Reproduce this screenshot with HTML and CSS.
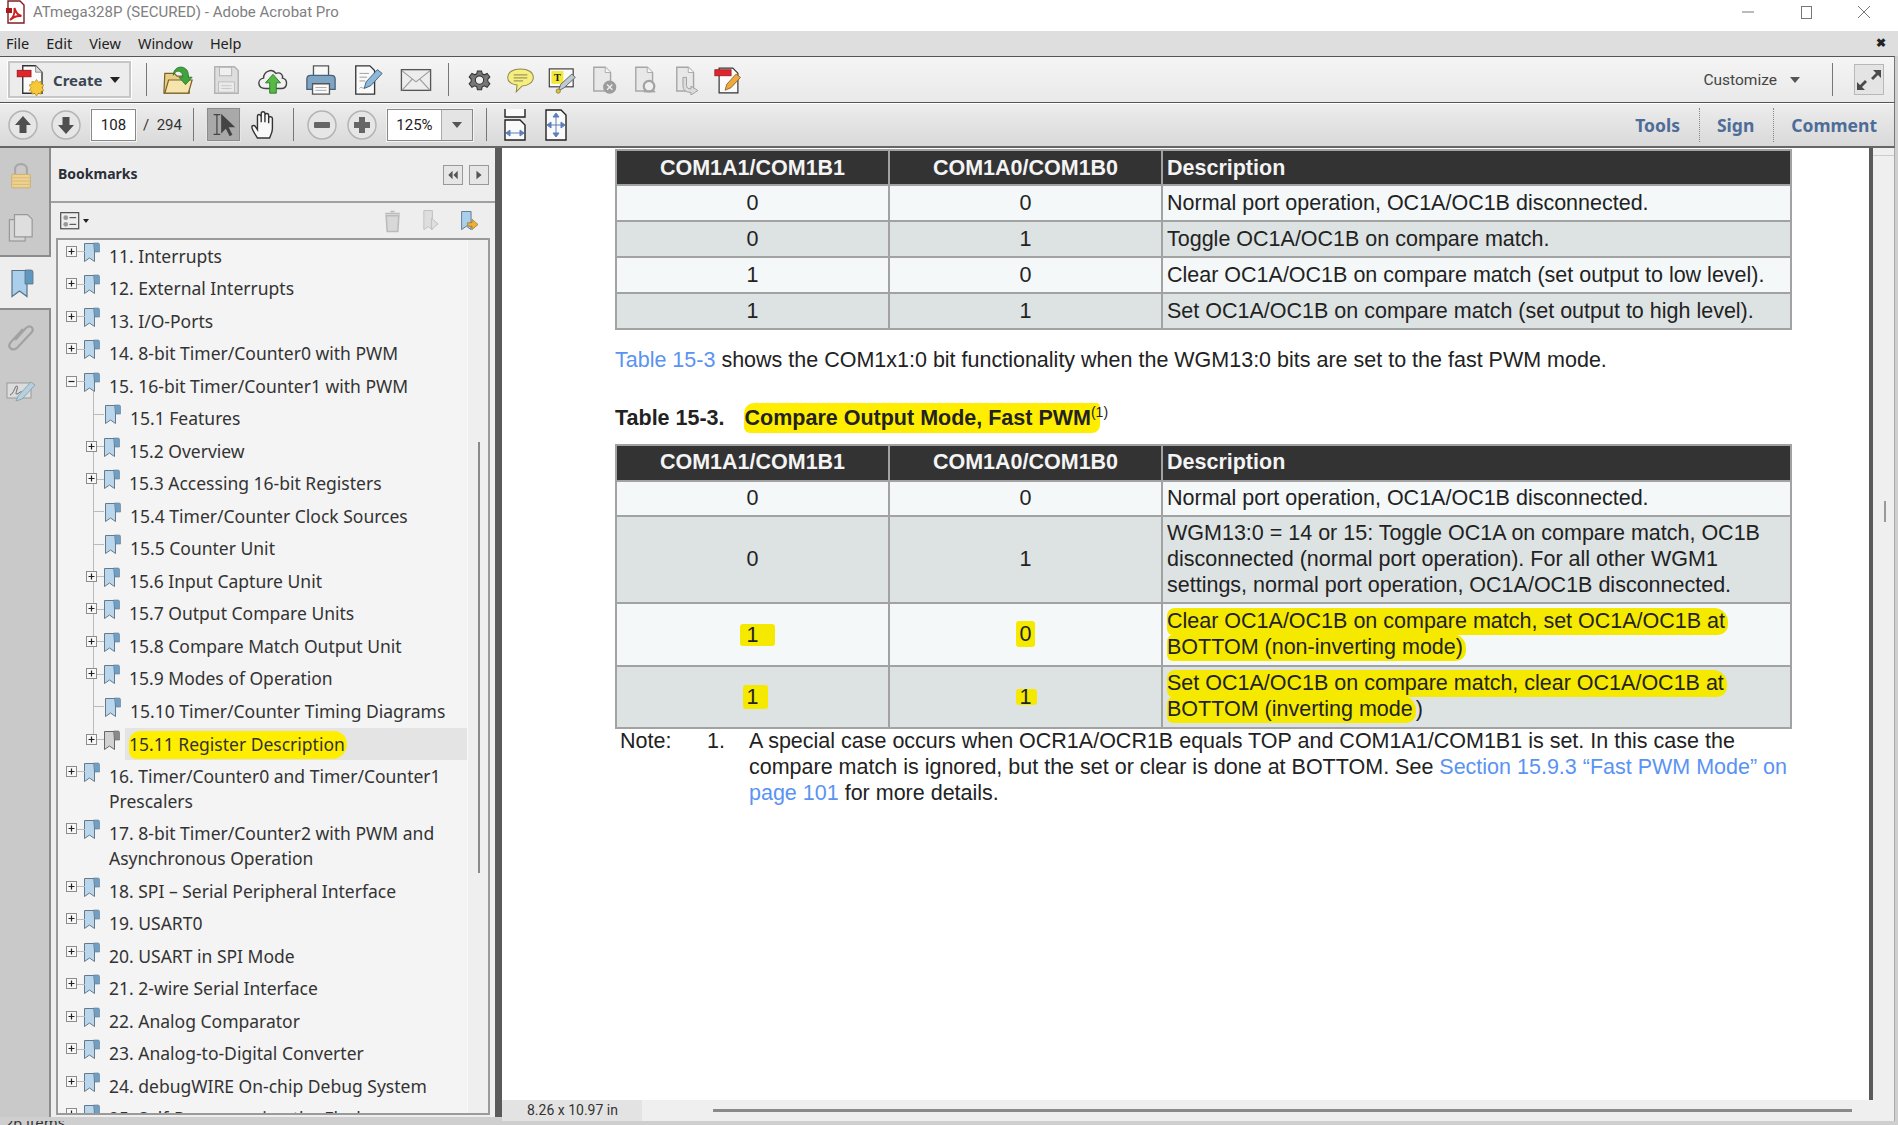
FILE: index.html
```html
<!DOCTYPE html>
<html lang="en">

<head>
    <meta charset="UTF-8">
    <meta name="viewport" content="width=device-width, initial-scale=1.0">
    <title>ATmega328P (SECURED) - Adobe Acrobat Pro</title>
    <link rel="stylesheet" href="styles.css">
</head>

<body>
    <svg class="defs" aria-hidden="true">
        <symbol id="bm" viewBox="0 0 17 21">
            <path d="M1.5 1.5h10v18l-5-3.5-5 3.5z" fill="#b9d6ec" stroke="#66798a"/>
            <path d="M10.5 1h4.5a1.500 1.500 0 0 1 1.500 1.500v7.500h-5z" fill="#6f9fc4" stroke="#66798a" stroke-width=".6"/>
        </symbol>
        <symbol id="bmg" viewBox="0 0 17 21">
            <path d="M1.500 1.500h10v18l-5-3.500-5 3.500z" fill="#d2d2d2" stroke="#666"/>
            <path d="M10.500 1h4.500a1.500 1.500 0 0 1 1.500 1.500v7.500h-5z" fill="#8a8a8a" stroke="#666" stroke-width=".6"/>
        </symbol>
        <symbol id="plus" viewBox="0 0 11 11">
            <rect x=".5" y=".5" width="10" height="10" fill="#f8f8f8" stroke="#8c8c8c"/>
            <path d="M2.500 5.500h6M5.500 2.500v6" stroke="#222" stroke-width="1.200"/>
        </symbol>
        <symbol id="minus" viewBox="0 0 11 11">
            <rect x=".5" y=".5" width="10" height="10" fill="#f8f8f8" stroke="#8c8c8c"/>
            <path d="M2.500 5.500h6" stroke="#222" stroke-width="1.200"/>
        </symbol>
        <symbol id="up" viewBox="0 0 30 30">
            <circle cx="15" cy="15" r="14" fill="#e6e6e6" stroke="#b4b4b4" stroke-width="1.500"/>
            <path d="M15 6l8 9h-4.500v8h-7v-8h-4.500z" fill="#4f4f4f"/>
        </symbol>
        <symbol id="down" viewBox="0 0 30 30">
            <circle cx="15" cy="15" r="14" fill="#e6e6e6" stroke="#b4b4b4" stroke-width="1.500"/>
            <path d="M15 24l8-9h-4.500v-8h-7v8h-4.500z" fill="#4f4f4f"/>
        </symbol>
        <symbol id="ghostdoc" viewBox="0 0 32 34">
            <path d="M5 2.500h13l6 6v21h-19z" fill="#e8e8e8" stroke="#a6a6a6" stroke-width="1.600"/>
            <path d="M18 2.500v6h6" fill="#f6f6f6" stroke="#a6a6a6"/>
        </symbol>
    </svg>

    <div class="titlebar">
        <svg class="pdf-logo" viewBox="0 0 20 24">
            <path d="M2 1h12l4 4v18h-16z" fill="#fff" stroke="#7d1f22" stroke-width="1.400"/>
            <path d="M4 20c3-2 5-7 4.500-12 1 4 3 7 7 8-4-.5-8 .5-11.500 4z" fill="none" stroke="#c8211f" stroke-width="2"/>
            <path d="M0 8h6v5h-6z" fill="#a9191b"/>
        </svg>
        <span class="title-text">ATmega328P (SECURED) - Adobe Acrobat Pro</span>
        <div class="win-btns">
            <svg viewBox="0 0 14 14"><path d="M1 7h12" stroke="#777" fill="none"/></svg>
            <svg viewBox="0 0 14 14"><rect x="2.500" y="1.500" width="10" height="12" stroke="#777" fill="none"/></svg>
            <svg viewBox="0 0 14 14"><path d="M1 1l12 12M13 1l-12 12" stroke="#777" fill="none"/></svg>
        </div>
    </div>

    <div class="menubar">
        <span>File</span><span>Edit</span><span>View</span><span>Window</span><span>Help</span>
        <b class="menu-close">&#10006;</b>
    </div>

    <div class="toolbar tb-top">
        <button class="create">
            <svg class="create-ico" viewBox="0 0 32 36">
                <path d="M7 3h14l7 7v23h-21z" fill="#fbfbfb" stroke="#333" stroke-width="1.500"/>
                <path d="M21 3v7h7" fill="#ddd" stroke="#888"/>
                <rect x="1" y="8" width="15" height="7" fill="#e2252b" stroke="#9b1b1f"/>
                <path d="M22 18l2 3 3-1 0 3 3 1-2 3 2 3-3 1 0 3-3-1-2 3-2-3-3 1 0-3-3-1 2-3-2-3 3-1 0-3 3 1z" fill="#f7c838" stroke="#b98a1c" stroke-width=".8"/>
            </svg>
            <span>Create</span><i class="caret"></i>
        </button>
        <i class="sep first"></i>
        <div class="group wide">
            <svg class="ti" viewBox="0 0 34 34">
                <path d="M2 31l1-21h10l3 3h12l1 18z" fill="#e9cf86" stroke="#7a6329" stroke-width="1.300"/>
                <path d="M3 31l4-14h25l-4 14z" fill="#f5e4ac" stroke="#7a6329" stroke-width="1.300"/>
                <path d="M12 12c0-8 8-11 13-7 3 2 3 6 3 9h4l-7 8-7-8h4c0-3-1-5-3-6-3-1-5 0-7 4z" fill="#3fa43b" stroke="#24712a" stroke-width=".8"/>
            </svg>
            <svg class="ti" viewBox="0 0 34 34">
                <path d="M5 3h21l4 4v24h-25z" fill="#dedede" stroke="#b2b2b2" stroke-width="1.500"/>
                <rect x="10" y="3.500" width="13" height="9" fill="#efefef" stroke="#b2b2b2"/>
                <rect x="9" y="19" width="17" height="11" fill="#eaeaea" stroke="#bdbdbd"/>
                <path d="M12 23h11M12 26h11" stroke="#c6c6c6"/>
            </svg>
            <svg class="ti" viewBox="0 0 34 34">
                <path d="M9 26c-9 0-9-10-2-11 0-7 9-11 13-5 5-2 8 2 7 5 6 1 6 11-1 11z" fill="#f1f1f1" stroke="#444" stroke-width="1.500"/>
                <path d="M17 11l8 9h-4.500v11h-7v-11h-4.500z" fill="#58b947" stroke="#2f7a2b"/>
            </svg>
            <svg class="ti" viewBox="0 0 34 34">
                <path d="M9 2h16v11h-16z" fill="#f8f8f8" stroke="#555" stroke-width="1.400"/>
                <path d="M2 16c0-3 2-4 4-4h22c2 0 4 1 4 4v11h-30z" fill="#7fa5c4" stroke="#47627b" stroke-width="1.400"/>
                <path d="M8 21h18v11h-18z" fill="#fbfbfb" stroke="#555" stroke-width="1.400"/>
                <path d="M11 25h12M11 28h12" stroke="#aaa"/>
            </svg>
            <svg class="ti" viewBox="0 0 34 34">
                <path d="M4 2h15l5 5v25h-20z" fill="#fafafa" stroke="#333" stroke-width="1.400"/>
                <path d="M8 10h10M8 14h8M8 18h6M8 26c2-3 3 1 5-1" stroke="#999" fill="none"/>
                <path d="M13 26l2-7 12-13 5 4-12 13z" fill="#8db8d8" stroke="#3f5f7a"/>
            </svg>
            <svg class="ti" viewBox="0 0 34 34">
                <rect x="1.500" y="6" width="31" height="22" fill="#ededed" stroke="#555" stroke-width="1.400"/>
                <path d="M2 7l15 12 15-12M2 28l11-12M32 28l-11-12" fill="none" stroke="#999" stroke-width="1.200"/>
            </svg>
        </div>
        <i class="sep"></i>
        <div class="group narrow">
            <svg class="ti" viewBox="-4 -4 42 42">
                <path d="M14 4h6l1 4 3 1.500 4-2 4 5-3 3.500v3l3 3.500-4 5-4-2-3 1.500-1 4h-6l-1-4-3-1.500-4 2-4-5 3-3.500v-3l-3-3.500 4-5 4 2 3-1.500z" fill="#777" stroke="#333" stroke-width="1.500"/>
                <circle cx="17" cy="17" r="6" fill="#eee" stroke="#333" stroke-width="1.500"/>
            </svg>
            <svg class="ti" viewBox="0 0 34 34">
                <path d="M17 4c9 0 15 4 15 10s-7 10-13 10l-7 7 1-8c-6-1-11-4-11-9 0-6 6-10 15-10z" fill="#f7ee82" stroke="#8e8a4e" stroke-width="1.200"/>
                <path d="M9 11h16M9 14.500h16M9 18h11" stroke="#a09a58" stroke-width="1.300"/>
            </svg>
            <svg class="ti" viewBox="0 0 34 34">
                <rect x="1.500" y="4" width="28" height="21" fill="#fbfbfb" stroke="#333" stroke-width="1.300"/>
                <rect x="4" y="6.500" width="14" height="15" fill="#f3e934"/>
                <text class="t-mark" x="7" y="18">T</text>
                <path d="M12 30l3-8 13-12 4 4-13 12z" fill="#bfc9d2" stroke="#555"/>
                <circle cx="12" cy="30" r="2.500" fill="#d8c24a" stroke="#8c7c2b"/>
            </svg>
            <svg class="ti" viewBox="0 0 32 34">
                <use href="#ghostdoc"/>
                <circle cx="23" cy="25" r="7.500" fill="#9c9c9c"/>
                <path d="M20 22l6 6M26 22l-6 6" stroke="#eee" stroke-width="1.500"/>
            </svg>
            <svg class="ti" viewBox="0 0 32 34">
                <use href="#ghostdoc"/>
                <circle cx="20" cy="24" r="6" fill="#efefef" stroke="#a2a2a2" stroke-width="2.500"/>
                <path d="M14 30h13" stroke="#a2a2a2" stroke-width="2"/>
            </svg>
            <svg class="ti" viewBox="0 0 32 34">
                <use href="#ghostdoc"/>
                <path d="M16 14v9c0 3 2 4 5 4v-3l8 5-8 5v-3c-6 0-9-2-9-8v-9z" fill="#dcdcdc" stroke="#9a9a9a"/>
            </svg>
            <svg class="ti" viewBox="0 0 34 34">
                <path d="M6 3h16l6 6v23h-22z" fill="#fbfbfb" stroke="#333" stroke-width="1.400"/>
                <rect x="1" y="5" width="19" height="7" fill="#e2252b" stroke="#9b1b1f"/>
                <path d="M13 29l2-7 11-12 5 4-11 12z" fill="#efa93f" stroke="#8a5f20"/>
            </svg>
        </div>
        <span class="customize">Customize</span><i class="caret small"></i>
        <i class="sep end"></i>
        <svg class="expand" viewBox="0 0 30 31">
            <rect x=".5" y=".5" width="29" height="30" fill="#e4e4e4" stroke="#b8b8b8"/>
            <path d="M17 14l5-5-3-3h8v8l-3-3-5 5zM13 18l-5 5 3 3h-8v-8l3 3 5-5z" fill="#4a4a4a"/>
        </svg>
    </div>

    <div class="toolbar tb-nav">
        <svg class="round first-round"><use href="#up"/></svg>
        <svg class="round"><use href="#down"/></svg>
        <span class="page-box">108</span>
        <span class="page-total">/ &nbsp;294</span>
        <i class="sep"></i>
        <span class="select-tool">
            <svg viewBox="0 0 33 33">
                <path d="M6 6h7M6 27h7M9.500 6v21" stroke="#444" fill="none" stroke-width="1.300"/>
                <path d="M14 5l0 21 5-5 4 8 3-1.500-4-8h7z" fill="#444"/>
            </svg>
        </span>
        <svg class="hand" viewBox="0 0 30 32">
            <path d="M8 30c-2-4-6-8-6-12 0-2 3-2 4 0l2 3v-14c0-3 3-3 4 0v6-9c0-3 4-3 4 0v9-7c0-3 4-3 4 0v8-5c0-3 4-2 4 0v11c0 4-2 7-3 10z" fill="#f8f8f8" stroke="#333" stroke-width="1.500"/>
        </svg>
        <i class="sep"></i>
        <svg class="round zoom-out" viewBox="0 0 30 30">
            <circle cx="15" cy="15" r="14" fill="#e6e6e6" stroke="#b4b4b4" stroke-width="1.500"/>
            <rect x="7" y="12" width="16" height="6" rx="1" fill="#666"/>
        </svg>
        <svg class="round zoom-in" viewBox="0 0 30 30">
            <circle cx="15" cy="15" r="14" fill="#e6e6e6" stroke="#b4b4b4" stroke-width="1.500"/>
            <path d="M12 7h6v5h5v6h-5v5h-6v-5h-5v-6h5z" fill="#666"/>
        </svg>
        <div class="zoom-combo"><span>125%</span><b><i class="caret small"></i></b></div>
        <i class="sep"></i>
        <svg class="fit fit-width" viewBox="0 0 24 32">
            <path d="M2 0v8h20v-8M2 11h15l5 5v15h-20z" fill="#fafafa" stroke="#222" stroke-width="1.400"/>
            <path d="M3 24h18M3 24l4-3v6zM21 24l-4-3v6z" fill="#5d7fbd" stroke="#5d7fbd"/>
        </svg>
        <svg class="fit" viewBox="0 0 24 32">
            <path d="M2 1h15l5 5v25h-20z" fill="#fafafa" stroke="#222" stroke-width="1.400"/>
            <path d="M12 5v22M4 16h16M12 4l-3 4h6zM12 28l-3-4h6zM3 16l4-3v6zM21 16l-4-3v6z" fill="#5d7fbd" stroke="#5d7fbd"/>
        </svg>
        <div class="task-tabs">
            <span>Tools</span><span>Sign</span><span>Comment</span>
        </div>
    </div>

    <div class="workspace">
        <aside class="rail">
            <div class="rail-tab">
                <svg class="rail-ico lock" viewBox="0 0 26 32">
                    <path d="M6 14v-6c0-8 14-8 14 0v6" fill="none" stroke="#a8a8a8" stroke-width="2.500"/>
                    <rect x="2" y="14" width="22" height="16" rx="1" fill="#ecd18f" stroke="#c9a96a"/>
                    <path d="M3 18h20M3 22h20M3 26h20" stroke="#d7b775"/>
                </svg>
                <svg class="rail-ico pages" viewBox="0 0 28 32">
                    <rect x="1.500" y="7" width="17" height="23" fill="#d4d4d4" stroke="#999" stroke-width="1.300"/>
                    <path d="M7 1.500h14l5 5v19h-19z" fill="#dedede" stroke="#999" stroke-width="1.300"/>
                </svg>
            </div>
            <div class="rail-tab active">
                <svg class="rail-ico" viewBox="0 0 24 30">
                    <path d="M2 1.500h15v26l-7.500-5.500-7.500 5.500z" fill="#a9cfec" stroke="#5b7283" stroke-width="1.200"/>
                    <path d="M15 1h6a2 2 0 0 1 2 2v12h-8z" fill="#5f97bf" stroke="#5b7283" stroke-width=".8"/>
                </svg>
            </div>
            <div class="rail-tab">
                <svg class="rail-ico clip" viewBox="0 0 28 30">
                    <path d="M8 17l11-12c5-4 9 1 5 5l-14 15c-6 4-10-2-6-6l12-13" fill="none" stroke="#a2a2a2" stroke-width="2.200"/>
                </svg>
                <svg class="rail-ico sign" viewBox="0 0 30 26">
                    <rect x="1" y="4" width="24" height="15" fill="#dcdcdc" stroke="#9a9a9a"/>
                    <path d="M4 16c4-1 5-10 7-9s-3 9 0 8 3-3 5-2" fill="none" stroke="#666"/>
                    <path d="M10 22l2-5 13-14 4 3-13 14z" fill="#b6cfe3" stroke="#8aa"/>
                </svg>
            </div>
        </aside>

        <section class="panel">
            <header class="panel-head">
                <h2>Bookmarks</h2>
                <span class="mini-btn">
                    <svg viewBox="0 0 14 14"><path d="M6.500 2v10l-5-5zM12.500 2v10l-5-5z" fill="#555"/></svg>
                </span>
                <span class="mini-btn">
                    <svg viewBox="0 0 14 14"><path d="M4 2v10l6-5z" fill="#555"/></svg>
                </span>
            </header>
            <div class="panel-tools">
                <svg class="opts" viewBox="0 0 21 19">
                    <rect x=".7" y=".7" width="19" height="17" fill="#eee" stroke="#444" stroke-width="1.200"/>
                    <circle cx="6" cy="6" r="2.500" fill="#999"/>
                    <circle cx="6" cy="13" r="2.500" fill="#999"/>
                    <path d="M10 6h7M10 13h7" stroke="#333"/>
                </svg>
                <i class="caret tiny"></i>
                <svg class="p-ico trash" viewBox="0 0 18 22">
                    <path d="M3 6h12l-1 15h-10zM2 4h14M7 2h4" fill="#d8d8d8" stroke="#bbb" stroke-width="1.500"/>
                </svg>
                <svg class="p-ico" viewBox="0 0 20 24">
                    <path d="M3 1h9v20l-4.500-3-4.500 3z" fill="#dedede" stroke="#c0c0c0"/>
                    <path d="M11 9l7 6-7 6z" fill="#dedede" stroke="#c0c0c0"/>
                </svg>
                <svg class="p-ico" viewBox="0 0 22 24">
                    <path d="M3 1h11v21l-5.500-4-5.500 4z" fill="#a9cfec" stroke="#56708a"/>
                    <path d="M10 14h5v-4l7 6-7 6v-4h-5z" fill="#eeb03a" stroke="#9b6f1c" stroke-width=".8"/>
                </svg>
            </div>
            <div class="tree">
                <ul class="tree-list">
                    <li class="node"><svg class="exp"><use href="#plus"/></svg><svg class="bm"><use href="#bm"/></svg><span>11. Interrupts</span></li>
                    <li class="node"><svg class="exp"><use href="#plus"/></svg><svg class="bm"><use href="#bm"/></svg><span>12. External Interrupts</span></li>
                    <li class="node"><svg class="exp"><use href="#plus"/></svg><svg class="bm"><use href="#bm"/></svg><span>13. I/O-Ports</span></li>
                    <li class="node"><svg class="exp"><use href="#plus"/></svg><svg class="bm"><use href="#bm"/></svg><span>14. 8-bit Timer/Counter0 with PWM</span></li>
                    <li class="node"><svg class="exp"><use href="#minus"/></svg><svg class="bm"><use href="#bm"/></svg><span>15. 16-bit Timer/Counter1 with PWM</span></li>
                    <li class="subs">
                        <ul>
                            <li class="node sub leaf"><svg class="bm"><use href="#bm"/></svg><span>15.1 Features</span></li>
                            <li class="node sub"><svg class="exp"><use href="#plus"/></svg><svg class="bm"><use href="#bm"/></svg><span>15.2 Overview</span></li>
                            <li class="node sub"><svg class="exp"><use href="#plus"/></svg><svg class="bm"><use href="#bm"/></svg><span>15.3 Accessing 16-bit Registers</span></li>
                            <li class="node sub leaf"><svg class="bm"><use href="#bm"/></svg><span>15.4 Timer/Counter Clock Sources</span></li>
                            <li class="node sub leaf"><svg class="bm"><use href="#bm"/></svg><span>15.5 Counter Unit</span></li>
                            <li class="node sub"><svg class="exp"><use href="#plus"/></svg><svg class="bm"><use href="#bm"/></svg><span>15.6 Input Capture Unit</span></li>
                            <li class="node sub"><svg class="exp"><use href="#plus"/></svg><svg class="bm"><use href="#bm"/></svg><span>15.7 Output Compare Units</span></li>
                            <li class="node sub"><svg class="exp"><use href="#plus"/></svg><svg class="bm"><use href="#bm"/></svg><span>15.8 Compare Match Output Unit</span></li>
                            <li class="node sub"><svg class="exp"><use href="#plus"/></svg><svg class="bm"><use href="#bm"/></svg><span>15.9 Modes of Operation</span></li>
                            <li class="node sub leaf"><svg class="bm"><use href="#bm"/></svg><span>15.10 Timer/Counter Timing Diagrams</span></li>
                            <li class="node sub selected"><svg class="exp"><use href="#plus"/></svg><svg class="bm"><use href="#bmg"/></svg><span class="sel-bg"><span class="sel-hl">15.11 Register Description</span></span></li>
                        </ul>
                    </li>
                    <li class="node"><svg class="exp"><use href="#plus"/></svg><svg class="bm"><use href="#bm"/></svg><span>16. Timer/Counter0 and Timer/Counter1<br>Prescalers</span></li>
                    <li class="node"><svg class="exp"><use href="#plus"/></svg><svg class="bm"><use href="#bm"/></svg><span>17. 8-bit Timer/Counter2 with PWM and<br>Asynchronous Operation</span></li>
                    <li class="node"><svg class="exp"><use href="#plus"/></svg><svg class="bm"><use href="#bm"/></svg><span>18. SPI – Serial Peripheral Interface</span></li>
                    <li class="node"><svg class="exp"><use href="#plus"/></svg><svg class="bm"><use href="#bm"/></svg><span>19. USART0</span></li>
                    <li class="node"><svg class="exp"><use href="#plus"/></svg><svg class="bm"><use href="#bm"/></svg><span>20. USART in SPI Mode</span></li>
                    <li class="node"><svg class="exp"><use href="#plus"/></svg><svg class="bm"><use href="#bm"/></svg><span>21. 2-wire Serial Interface</span></li>
                    <li class="node"><svg class="exp"><use href="#plus"/></svg><svg class="bm"><use href="#bm"/></svg><span>22. Analog Comparator</span></li>
                    <li class="node"><svg class="exp"><use href="#plus"/></svg><svg class="bm"><use href="#bm"/></svg><span>23. Analog-to-Digital Converter</span></li>
                    <li class="node"><svg class="exp"><use href="#plus"/></svg><svg class="bm"><use href="#bm"/></svg><span>24. debugWIRE On-chip Debug System</span></li>
                    <li class="node"><svg class="exp"><use href="#plus"/></svg><svg class="bm"><use href="#bm"/></svg><span>25. Self-Programming the Flash</span></li>
                </ul>
                <div class="tree-scroll"><i></i></div>
            </div>
        </section>

        <i class="splitter"></i>

        <main class="doc">
            <div class="page">
                <table class="reg short">
                    <tr><th>COM1A1/COM1B1</th><th>COM1A0/COM1B0</th><th class="desc">Description</th></tr>
                    <tr><td>0</td><td>0</td><td class="desc">Normal port operation, OC1A/OC1B disconnected.</td></tr>
                    <tr><td>0</td><td>1</td><td class="desc">Toggle OC1A/OC1B on compare match.</td></tr>
                    <tr><td>1</td><td>0</td><td class="desc">Clear OC1A/OC1B on compare match (set output to low level).</td></tr>
                    <tr><td>1</td><td>1</td><td class="desc">Set OC1A/OC1B on compare match (set output to high level).</td></tr>
                </table>

                <p class="intro"><a>Table 15-3</a> shows the COM1x1:0 bit functionality when the WGM13:0 bits are set to the fast PWM mode.</p>

                <p class="caption">Table 15-3.<span class="hl hl-cap">Compare Output Mode, Fast PWM</span><sup>(1)</sup></p>

                <table class="reg tall">
                    <tr><th>COM1A1/COM1B1</th><th>COM1A0/COM1B0</th><th class="desc">Description</th></tr>
                    <tr class="r-one"><td>0</td><td>0</td><td class="desc">Normal port operation, OC1A/OC1B disconnected.</td></tr>
                    <tr class="r-three"><td>0</td><td>1</td><td class="desc">WGM13:0 = 14 or 15: Toggle OC1A on compare match, OC1B<br>disconnected (normal port operation). For all other WGM1<br>settings, normal port operation, OC1A/OC1B disconnected.</td></tr>
                    <tr class="r-two"><td><span class="hl-num n-a">1</span></td><td><span class="hl-num n-b">0</span></td><td class="desc"><span class="hl">Clear OC1A/OC1B on compare match, set OC1A/OC1B at</span><br><span class="hl">BOTTOM (non-inverting mode)</span></td></tr>
                    <tr class="r-last"><td><span class="hl-num n-c">1</span></td><td><span class="hl-num n-d">1</span></td><td class="desc"><span class="hl">Set OC1A/OC1B on compare match, clear OC1A/OC1B at</span><br><span class="hl">BOTTOM (inverting mode</span>)</td></tr>
                </table>

                <div class="note">
                    <span>Note:</span>
                    <span>1.</span>
                    <p>A special case occurs when OCR1A/OCR1B equals TOP and COM1A1/COM1B1 is set. In this case the<br>compare match is ignored, but the set or clear is done at BOTTOM. See <a>Section 15.9.3 “Fast PWM Mode” on<br>page 101</a> for more details.</p>
                </div>
            </div>
            <footer class="doc-status">
                <span class="page-size">8.26 x 10.97 in</span>
                <i class="hscroll"></i>
            </footer>
        </main>

        <aside class="vscroll">
            <i class="v-top"></i>
            <i class="v-thumb"></i>
        </aside>
    </div>

    <div class="statusbar">26 items</div>
</body>

</html>
```

FILE: styles.css
```css
*,
::before,
::after {
    margin: 0;
    padding: 0;
    box-sizing: border-box;
}

html,
body {
    height: 100%;
    overflow: hidden;
}

body {
    font: 14px/1.2 "Noto Sans", sans-serif;
    background: #cfcfcf;
    color: #222;
}

i {
    display: block;
}

ul {
    list-style: none;
}

.defs {
    position: absolute;
    width: 0;
    height: 0;
}

/* window title */
.titlebar {
    height: 31px;
    background: #fff;
    display: flex;
    align-items: center;
    padding: 0 0 7px 6px;
}

.pdf-logo {
    width: 20px;
    height: 24px;
    margin-right: 7px;
}

.title-text {
    font: 15px Roboto, sans-serif;
    color: #808080;
}

.win-btns {
    margin-left: auto;
    margin-right: 27px;
    display: flex;
    gap: 44px;
}

.win-btns svg {
    width: 14px;
    height: 14px;
}

/* menu */
.menubar {
    height: 25px;
    background: #dedede;
    display: flex;
    align-items: center;
    padding: 0 12px 0 6px;
    font-size: 14.500px;
    color: #222;
}

.menubar span {
    margin-right: 17px;
}

.menu-close {
    margin-left: auto;
    font-size: 12px;
}

/* toolbars */
.toolbar {
    width: 1895px;
    display: flex;
    align-items: center;
    border-top: 1px solid #555;
    border-right: 1px solid #777;
}

.tb-top {
    height: 46px;
    padding-left: 8px;
    background: linear-gradient(#f5f5f5, #e9e9e9);
}

.tb-nav {
    height: 46px;
    padding-left: 8px;
    background: linear-gradient(#ededed, #d9d9d9);
    border-bottom: 2px solid #666;
    box-shadow: inset 0 1px #fff;
}

.create {
    width: 123px;
    height: 37px;
    display: flex;
    align-items: center;
    font: bold 15px "Noto Sans", sans-serif;
    color: #3a4654;
    background: #ececec;
    border: 2px solid #c6c6c6;
    outline: 1px solid #fff;
    padding-left: 6px;
}

.create-ico {
    width: 30px;
    height: 33px;
    margin-right: 7px;
}

.caret {
    width: 0;
    height: 0;
    border: 5px solid transparent;
    border-top: 6px solid #222;
    border-bottom: 0;
    margin-left: 8px;
}

.caret.small {
    border-top-color: #555;
}

.caret.tiny {
    border-width: 4px 3px 0;
    border-top-color: #222;
    margin-left: 3px;
}

.sep {
    width: 1px;
    height: 33px;
    background: #777;
    flex: none;
}

.sep.first {
    margin: 0 15px 0 15px;
}

.group {
    display: flex;
    align-items: center;
}

.wide {
    gap: 15.500px;
    margin-right: 16px;
}

.narrow {
    gap: 12.500px;
    margin-left: 16px;
}

.ti {
    width: 29px;
    height: 30px;
    flex: none;
}

.wide .ti {
    width: 32px;
    height: 32px;
}

.t-mark {
    font: bold 12px "Liberation Serif", serif;
    fill: #222;
}

.customize {
    margin-left: auto;
    font: 15.500px Roboto, sans-serif;
    color: #444;
}

.customize + .caret {
    margin-left: 13px;
}

.sep.end {
    margin: 0 21px 0 32px;
}

.expand {
    width: 30px;
    height: 31px;
    margin-right: 10px;
}

.round {
    width: 30px;
    height: 30px;
    flex: none;
    margin-right: 12px;
}

.first-round {
    margin-right: 13px;
}

.page-box {
    width: 45px;
    height: 32px;
    background: #fff;
    border: 1px solid #888;
    outline: 1px solid #f4f4f4;
    font: 15px/30px Roboto, sans-serif;
    text-align: center;
    margin-left: -2px;
}

.page-total {
    font: 15px Roboto, sans-serif;
    margin: 0 11px 0 7px;
    white-space: nowrap;
    color: #333;
}

.tb-nav .sep {
    margin-right: 13px;
}

.select-tool {
    width: 33px;
    height: 33px;
    background: #a9a9a9;
    border: 1px solid #8c8c8c;
    outline: 1px solid #e6e6e6;
    flex: none;
}

.select-tool svg {
    display: block;
    width: 31px;
    height: 31px;
}

.hand {
    width: 28px;
    height: 30px;
    margin: 0 15px 0 10px;
    flex: none;
}

.zoom-out {
    margin-right: 10px;
}

.zoom-in {
    margin-right: 10px;
}

.zoom-combo {
    width: 86px;
    height: 32px;
    display: flex;
    background: #fff;
    border: 1px solid #888;
    outline: 1px solid #f4f4f4;
    margin-right: 13px;
    font: 15px/30px Roboto, sans-serif;
    flex: none;
}

.zoom-combo span {
    flex: 1;
    text-align: center;
}

.zoom-combo b {
    width: 31px;
    background: #e4e4e4;
    border-left: 1px solid #aaa;
    display: grid;
    place-content: center;
}

.zoom-combo .caret {
    margin: 0;
}

.fit {
    width: 24px;
    height: 32px;
    flex: none;
}

.fit-width {
    margin: 0 17px 0 3px;
}

.task-tabs {
    margin-left: auto;
    display: flex;
    height: 34px;
    align-items: center;
    font: bold 17.500px "Noto Sans", sans-serif;
    color: #4d6c97;
    margin-right: 17px;
}

.task-tabs span {
    height: 34px;
    line-height: 35px;
    padding: 0 19px 0 17px;
    border-left: 1px dotted #888;
}

.task-tabs span:first-child {
    border: 0;
}

.task-tabs span:last-child {
    padding-right: 0;
}

/* main area */
.workspace {
    height: 973px;
    display: flex;
}

.rail {
    width: 51px;
    height: 969px;
    background: #c9c9c9;
    border-right: 2px solid #8c8c8c;
    flex: none;
}

.rail-tab {
    display: flex;
    flex-direction: column;
    align-items: center;
    padding-right: 7px;
}

.rail-tab:first-child {
    height: 109px;
    border-bottom: 2px solid #8c8c8c;
    gap: 23px;
    padding-top: 14px;
}

.rail-tab.active {
    height: 53px;
    width: 51px;
    background: #eee;
    border-bottom: 2px solid #8c8c8c;
    padding-top: 12px;
}

.rail-tab:last-child {
    gap: 26px;
    padding-top: 13px;
}

.rail-ico {
    width: 24px;
    height: 30px;
    flex: none;
}

.lock {
    width: 22px;
    height: 28px;
}

.pages {
    width: 26px;
    height: 30px;
}

.clip {
    width: 28px;
    height: 30px;
}

.sign {
    width: 30px;
    height: 26px;
}

.panel {
    width: 444px;
    height: 969px;
    background: #eee;
    flex: none;
}

.panel-head {
    height: 55px;
    display: flex;
    align-items: center;
    gap: 6px;
    padding: 0 6px 0 7px;
    border-bottom: 2px solid #a0a0a0;
}

.panel-head h2 {
    font-size: 14px;
    font-weight: 700;
    color: #2a2f38;
    margin-right: auto;
}

.mini-btn {
    width: 20px;
    height: 20px;
    border: 1px solid #999;
    background: #e6e6e6;
    display: grid;
    place-content: center;
}

.mini-btn svg {
    width: 12px;
    height: 12px;
    display: block;
}

.panel-tools {
    height: 35px;
    display: flex;
    align-items: center;
    padding-left: 9px;
}

.opts {
    width: 20px;
    height: 18px;
}

.p-ico {
    width: 19px;
    height: 24px;
    margin-left: 19px;
}

.trash {
    margin-left: 294px;
}

.tree {
    width: 434px;
    height: 877px;
    margin-left: 5px;
    background: #f4f4f4;
    border: 2px solid #9a9a9a;
    display: flex;
    overflow: hidden;
}

.tree-list {
    width: 409px;
    flex: none;
    font: 17.500px/25px "Noto Sans", sans-serif;
    color: #333;
    white-space: nowrap;
}

.node {
    position: relative;
    display: flex;
    align-items: flex-start;
    padding: 3.750px 0 3.750px 8px;
}

.node::before {
    content: "";
    position: absolute;
    left: 19px;
    top: 11px;
    width: 8px;
    border-top: 1px solid #bbb;
}

.exp {
    position: relative;
    width: 11px;
    height: 11px;
    margin: 2px 6px 0 0;
    flex: none;
}

.bm {
    width: 17px;
    height: 21px;
    margin: -2px 9px 0 0;
    flex: none;
}

.subs {
    position: relative;
}

.subs::before {
    content: "";
    position: absolute;
    left: 35px;
    top: -12px;
    bottom: 20px;
    border-left: 1px solid #bbb;
}

.sub {
    padding-left: 28px;
}

.sub::before {
    left: 36px;
    width: 10px;
}

.leaf {
    padding-left: 46px;
}

.selected {
    padding-top: 0;
    padding-bottom: 0;
    height: 32.500px;
}

.selected .exp {
    margin-top: 6px;
}

.selected .bm {
    margin: 2px 5px 0 0;
}

.sel-bg {
    flex: 1;
    height: 32.500px;
    background: #e4e4e4;
    padding: 3px 0 0 4px;
}

.sel-hl {
    display: inline-block;
    background: #ffee00;
    border-radius: 12px 14px 16px 8px;
    height: 28px;
    line-height: 27px;
    padding-right: 2px;
}

.tree-scroll {
    flex: 1;
    background: #efefef;
    border-left: 1px solid #f8f8f8;
    padding: 202px 0 0 10px;
}

.tree-scroll i {
    width: 2px;
    height: 431px;
    background: #8a8a8a;
}

.splitter {
    width: 7px;
    height: 969px;
    background: #5a5a5a;
    flex: none;
}

/* document */
.doc {
    width: 1367px;
    height: 973px;
    background: #fff;
    display: flex;
    flex-direction: column;
    flex: none;
}

.page {
    flex: 1;
    padding: 1px 0 0 113px;
    font: 21.500px/26px "Liberation Sans", sans-serif;
    color: #222;
}

.page a {
    color: #5a93f2;
}

.reg {
    width: 1177px;
    table-layout: fixed;
    border-collapse: collapse;
    border: 2px solid #a2a2a2;
}

.reg th,
.reg td {
    width: 273px;
    border: 2px solid #a2a2a2;
    text-align: center;
    padding: 0 4px;
}

.tall th,
.tall td {
    padding-bottom: 2px;
}

.reg th {
    height: 36px;
    background: #333;
    color: #f4f4f4;
}

.short th {
    height: 35px;
}

.reg .desc {
    width: auto;
    text-align: left;
    border-left-width: 1px;
}

.reg td {
    height: 36px;
    background: #f4f8f9;
}

.reg tr:nth-child(odd) td {
    background: #dde2e2;
}

.r-one td {
    height: 35px;
}

.reg .r-three td {
    height: 87px;
}

.reg .r-two td {
    height: 63px;
}

.reg .r-last td {
    height: 62px;
}

.hl {
    background: #f5e900;
    border-radius: 8px 14px 10px 6px;
    padding: 1px 3px 2px 0;
}

.hl-num {
    display: inline-block;
    background: #f5e900;
    border-radius: 3px;
    vertical-align: middle;
}

.n-a {
    line-height: 22px;
    padding: 0 17px 0 7px;
    margin-left: 10px;
}

.n-b {
    line-height: 26px;
    padding: 0 4px;
}

.n-c {
    line-height: 24px;
    padding: 0 10px 0 4px;
    margin-left: 6px;
}

.n-d {
    line-height: 16px;
    padding: 0 6px 0 4px;
    margin-left: 2px;
}

.intro {
    margin-top: 17px;
}

.caption {
    margin-top: 32px;
    font-weight: 700;
    height: 39px;
}

.hl-cap {
    background: #ffee00;
    margin-left: 19px;
    padding: 3px 9px 3px 1px;
    border-radius: 10px 4px 8px 6px;
}

.caption sup {
    font-size: 14px;
    font-weight: 400;
    line-height: 0;
    vertical-align: 8px;
    margin-left: -9px;
}

.note {
    display: grid;
    grid-template-columns: 87px 42px 1fr;
    padding-left: 5px;
    margin-top: -1px;
}

/* status strip */
.doc-status {
    height: 21px;
    flex: none;
    display: flex;
    align-items: center;
    background: #efefef;
}

.page-size {
    width: 140px;
    height: 21px;
    background: #e3e3e3;
    font: 14px/21px Roboto, sans-serif;
    color: #333;
    padding-left: 25px;
}

.hscroll {
    width: 1139px;
    height: 3px;
    margin: 0 0 0 71px;
    background: #8a8a8a;
}

.vscroll {
    width: 26px;
    height: 973px;
    padding-left: 4px;
    background: linear-gradient(#5a5a5a, #5a5a5a) no-repeat 0 0 / 4px 952px, #efefef;
    border-right: 1px solid #aaa;
}

.v-top {
    height: 8px;
    border-bottom: 1px solid #ccc;
}

.v-thumb {
    width: 2px;
    height: 21px;
    margin: 345px 0 0 11px;
    background: #999;
}

.statusbar {
    height: 4px;
    overflow: hidden;
    padding-left: 5px;
    font: 15px/1 "Noto Sans", sans-serif;
    color: #333;
    line-height: 2px;
}
```
